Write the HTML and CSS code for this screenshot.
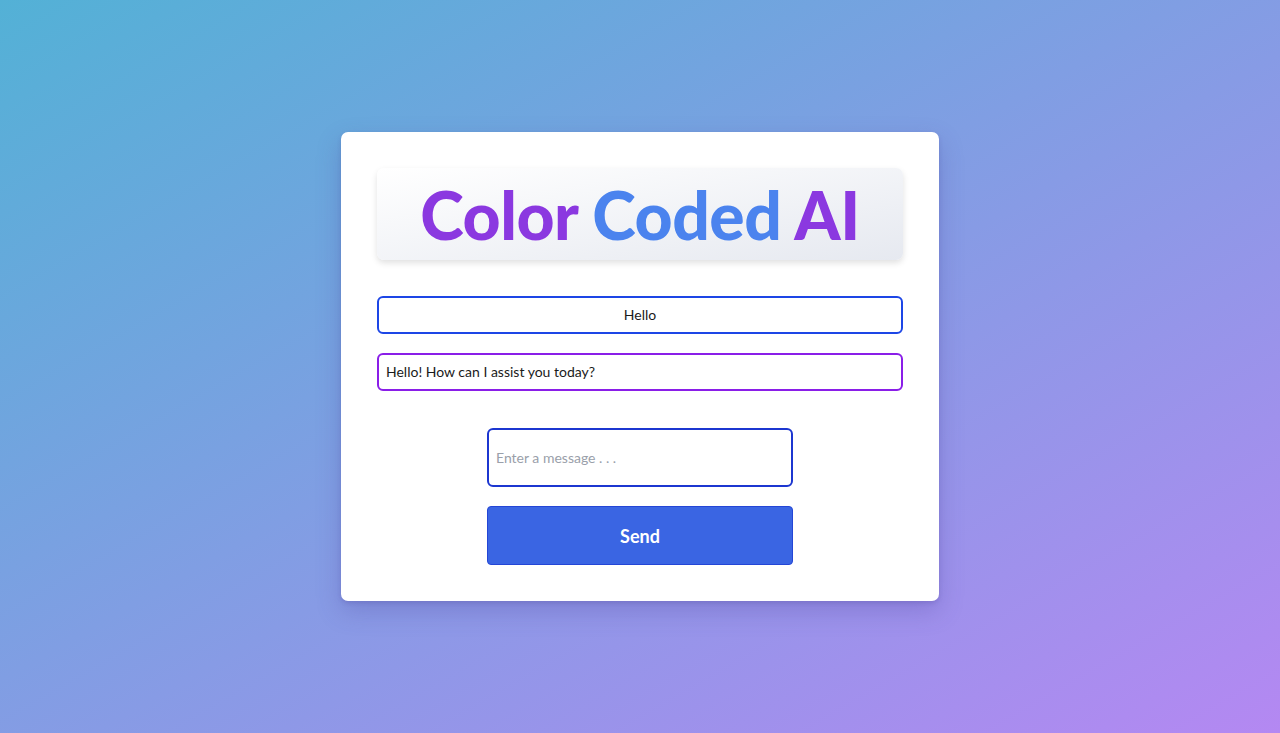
FILE: index.html
```html
<!DOCTYPE html>
<html lang="en">
<head>
<meta charset="utf-8">
<title>Color Coded AI</title>
<link rel="stylesheet" href="styles.css">
</head>
<body>
<main class="page">
  <section class="card">
    <header class="title-box">
      <h1 class="title"><span class="purple">Color</span> <span class="blue">Coded</span> <span class="purple">AI</span></h1>
    </header>
    <div class="messages">
      <div class="msg msg-user">Hello</div>
      <div class="msg msg-ai">Hello! How can I assist you today?</div>
    </div>
    <form class="composer">
      <input class="composer-input" type="text" placeholder="Enter a message . . .">
      <button class="send" type="button">Send</button>
    </form>
  </section>
</main>
</body>
</html>
```

FILE: styles.css
```css
* { box-sizing: border-box; }
html, body { margin: 0; height: 100%; }
body {
  font-family: Lato, "Open Sans", sans-serif;
  background: linear-gradient(to bottom right, #53b1d6, #b488f2);
  color: #111;
}
.page {
  height: 100%;
  display: flex;
  justify-content: center;
  padding-top: 132px;
}
.card {
  width: 598px;
  height: 469px;
  background: #fff;
  border-radius: 7px;
  padding: 36px;
  box-shadow: 0 10px 25px rgba(70, 60, 150, 0.25), 0 2px 4px rgba(70, 60, 150, 0.2);
}
.title-box {
  height: 92px;
  border-radius: 7px;
  background: linear-gradient(to bottom right, #ffffff, #e6e9f0);
  box-shadow: 0 3px 6px rgba(0, 0, 0, 0.12);
  display: flex;
  align-items: center;
  justify-content: center;
}
.title {
  margin: 0;
  font-size: 66px;
  font-weight: 900;
  letter-spacing: -0.5px;
  line-height: 1;
  padding-top: 2px;
  text-shadow: 0 0 1px rgba(255, 255, 255, 0.6);
}
.purple { color: #8b38e0; }
.blue { color: #4b83ee; }
.messages {
  margin-top: 36px;
  display: flex;
  flex-direction: column;
  gap: 19px;
}
.msg {
  height: 38px;
  border: 2px solid;
  border-radius: 6px;
  font-size: 14px;
  line-height: 34px;
  padding: 0 7px;
  color: #1a1a1a;
}
.msg-user { border-color: #1d46e6; text-align: center; }
.msg-ai { border-color: #8a1ee8; }
.composer {
  margin: 37px auto 0;
  width: 306px;
  display: flex;
  flex-direction: column;
  gap: 19px;
}
.composer-input {
  height: 59px;
  border: 2px solid #1c36d0;
  border-radius: 6px;
  font-family: inherit;
  font-size: 14px;
  padding: 0 7px;
  outline: none;
  color: #222;
}
.composer-input::placeholder { color: #9aa0aa; }
.send {
  height: 59px;
  border: 1px solid #2446d6;
  border-radius: 4px;
  background: #3a65e3;
  color: #fff;
  font-family: inherit;
  font-size: 18px;
  font-weight: 700;
  cursor: pointer;
}
```
